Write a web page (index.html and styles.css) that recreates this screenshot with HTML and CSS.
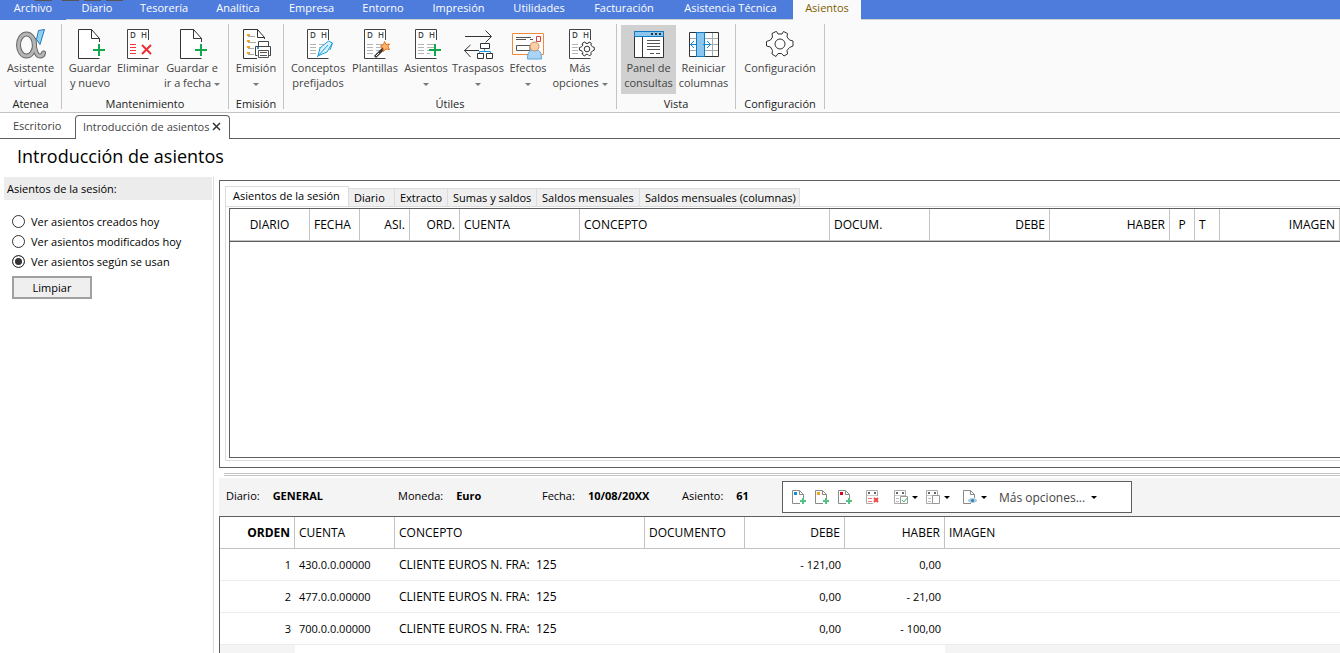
FILE: index.html
```html
<!DOCTYPE html>
<html lang="es">
<head>
<meta charset="utf-8">
<meta name="viewport" content="width=device-width, initial-scale=1">
<title>Introducción de asientos</title>
<link rel="stylesheet" href="styles.css">
</head>
<body>
<svg class="defs" aria-hidden="true" width="0" height="0">
  <symbol id="page" viewBox="0 0 32 32">
    <path d="M25.500 14V10.500L17.500 1.500H4.500V30.500H25.500M17.500 1.500V10.500H25.500" fill="#fff" stroke="#333"/>
    <path d="M19 22H31M25 16V28" stroke="#12a84c" stroke-width="2"/>
  </symbol>
  <symbol id="sheet" viewBox="0 0 32 32">
    <path d="M26.500 12V1.500H5.500V30.500H26.500" fill="#fff" stroke="#444"/>
    <text x="8" y="10" font-size="8" font-weight="600" fill="#444">D</text>
    <text x="19" y="10" font-size="8" font-weight="600" fill="#444">H</text>
  </symbol>
  <symbol id="rows" viewBox="0 0 32 32">
    <path d="M8 16.500H14M8 19.500H14M8 22.500H14M8 25.500H14M17 16.500H24M17 19.500H24M17 22.500H24M17 25.500H20" stroke="#b5b5b5"/>
  </symbol>
  <symbol id="gear" viewBox="0 0 32 32">
    <path d="M12 3.500H12.500L14 6H18L19.500 3.500L23.500 5.500L23 9L25.500 12L29 13V18L25.500 19.500L23 22.500L23.500 26L20 28L17.500 25.500H14L12 28.500L8 26L8.500 22.500L6.500 19L2.500 18V13.500L6.500 12L8.500 9L8 5.500Z" fill="#fff" stroke="#333" stroke-linejoin="round" vector-effect="non-scaling-stroke"/>
    <circle cx="16" cy="16" r="5" fill="#fff" stroke="#333" vector-effect="non-scaling-stroke"/>
  </symbol>
  <symbol id="mini-page" viewBox="0 0 16 16">
    <path d="M12.500 9V5.500L8.500 1.500H1.500V14.500H9M8.500 1.500V5.500H12.500" fill="#fff" stroke="#8a8a8a"/>
  </symbol>
  <symbol id="mini-plus" viewBox="0 0 16 16">
    <path d="M9 12H15M12 9V15" stroke="#55c184" stroke-width="2"/>
  </symbol>
  <symbol id="mini-sheet" viewBox="0 0 16 16">
    <path d="M12.500 7V1.500H1.500V14.500H8" fill="#fff" stroke="#aaa"/>
    <path d="M3 4H5M9 4H11" stroke="#666" stroke-width="2"/>
    <path d="M2 6.500H12" stroke="#ccc"/>
  </symbol>
</svg>

<nav class="menu" aria-label="Menú principal">
  <svg class="menu-marks" aria-hidden="true" width="123" height="1"><path d="M35 .5H52M62 .5H79M84 .5H101M106 .5H123" stroke="#555"/></svg>
  <a class="menu-file" href="#">Archivo</a><a href="#">Diario</a><a href="#">Tesorería</a><a href="#">Analítica</a><a href="#">Empresa</a><a href="#">Entorno</a><a href="#">Impresión</a><a href="#">Utilidades</a><a href="#">Facturación</a><a href="#">Asistencia Técnica</a><a class="current" href="#" aria-current="page">Asientos</a>
</nav>

<div class="ribbon">
  <section class="group g-atenea">
    <div class="tools">
      <button type="button"><svg viewBox="0 0 32 32"><g fill="none" stroke-linecap="round"><g stroke="#666" stroke-width="5"><ellipse cx="11.500" cy="17" rx="8" ry="11"/><path d="M19 12C19 20 21 28 25 28Q28 28 28.500 25"/></g><g stroke="#b5b5b5" stroke-width="3"><ellipse cx="11.500" cy="17" rx="8" ry="11"/><path d="M19 12C19 20 21 28 25 28Q28 28 28.500 25"/></g></g><path d="M23.500 2.500L29.500 1.500L25 16.500L21.500 11.500Z" fill="#8fd0f5" stroke="#2479b5"/></svg><span>Asistente<br>virtual</span></button>
    </div>
    <h2>Atenea</h2>
  </section>
  <section class="group g-mant">
    <div class="tools">
      <button type="button"><svg viewBox="0 0 32 32"><use href="#page"/></svg><span>Guardar<br>y nuevo</span></button>
      <button type="button"><svg viewBox="0 0 32 32"><use href="#sheet"/><path d="M8 16.500H14M8 19.500H14M8 22.500H14M8 25.500H14" stroke="#f03a3a"/><path d="M20 17L29 26M29 17L20 26" stroke="#ee2f2f" stroke-width="2"/></svg><span>Eliminar</span></button>
      <button type="button"><svg viewBox="0 0 32 32"><use href="#page"/></svg><span>Guardar e<br>ir a fecha <i class="arrow"></i></span></button>
    </div>
    <h2>Mantenimiento</h2>
  </section>
  <section class="group g-emision">
    <div class="tools">
      <button type="button"><svg viewBox="0 0 32 32"><path d="M24.500 11V9.500L17.500 1.500H3.500V30.500H17M17.500 1.500V9.500H24.500" fill="#fff" stroke="#333"/><path d="M7 7H10M7 13H10M7 19H10M7 25H10" stroke="#f2a024" stroke-width="2"/><path d="M8 8.500H15M8 14.500H16M8 20.500H14M8 26.500H14" stroke="#aaa"/><path d="M18.500 18V13.500H28.500V18M17.500 27.500H15.500V18.500H30.500V27.500H28.500" fill="#fff" stroke="#444"/><path d="M18.500 22.500H28.500V29.500H18.500ZM20 24.500H27M20 27.500H27" fill="#fff" stroke="#555"/><path d="M17 20H19" stroke="#2a9be0" stroke-width="2"/></svg><span>Emisión<br><i class="arrow"></i></span></button>
    </div>
    <h2>Emisión</h2>
  </section>
  <section class="group g-utiles">
    <div class="tools">
      <button type="button"><svg viewBox="0 0 32 32"><use href="#sheet"/><use href="#rows"/><path d="M16 28L18 20L26.500 13L30.500 15L25 24L18 27ZM15 29L26 17M30.500 15L28 22" fill="#d8f1fc" stroke="#1ba0dc"/></svg><span>Conceptos<br>prefijados</span></button>
      <button type="button"><svg viewBox="0 0 32 32"><use href="#sheet"/><use href="#rows"/><path d="M16 29L25 20" stroke="#333" stroke-width="3"/><path d="M17 28L20 25" stroke="#fff"/><path d="M25.500 13.500L27 16.500L30.500 16L29 18.500L30.500 21.500L27 21L24.500 23.500L24 20L21.500 18L24.500 16.500Z" fill="#fbb36b" stroke="#e8741c"/></svg><span>Plantillas</span></button>
      <button type="button"><svg viewBox="0 0 32 32"><use href="#sheet"/><use href="#rows"/><path d="M19 22H31M25 16V28" stroke="#12a84c" stroke-width="2"/></svg><span>Asientos<br><i class="arrow"></i></span></button>
      <button type="button"><svg viewBox="0 0 32 32"><path d="M3 8.500H29M23.500 2.500L29.500 8.500L23.500 14.500M17 22.500H2.500M8.500 17L2.500 22.500L8.500 29" fill="none" stroke="#333"/><path d="M17.500 25V23.500H28.500V25M22.500 20V24" fill="none" stroke="#1b98dd"/><path d="M18.500 15.500H27.500V20.500H18.500ZM15.500 25.500H21.500V30.500H15.500ZM24.500 25.500H30.500V30.500H24.500Z" fill="#fff" stroke="#333"/></svg><span>Traspasos<br><i class="arrow"></i></span></button>
      <button type="button"><svg class="wide" viewBox="0 0 34 32"><path d="M1.500 5.500H32.500V26.500H1.500Z" fill="#fff" stroke="#ee8a3c"/><path d="M5 9.500H20M5 11.500H15M19 11.500H22" stroke="#555"/><path d="M5.500 17.500H19V22.500H5.500Z" fill="#fff" stroke="#555"/><path d="M25.500 8.500H29.500V13.500H25.500Z" fill="#fff" stroke="#e43b3b"/><path d="M16.500 31C16.500 22 20 22 23.500 22S30.500 22 30.500 31Z" fill="#a9d4f5" stroke="#5da7dd"/><circle cx="23.500" cy="18.500" r="4.500" fill="#fbcfa6" stroke="#c98e5e"/></svg><span>Efectos<br><i class="arrow"></i></span></button>
      <button type="button"><svg viewBox="0 0 32 32"><use href="#sheet"/><use href="#rows"/><use href="#gear" x="14" y="12" width="18" height="18"/></svg><span>Más<br>opciones <i class="arrow"></i></span></button>
    </div>
    <h2>Útiles</h2>
  </section>
  <section class="group g-vista">
    <div class="tools">
      <button type="button" class="pressed" aria-pressed="true"><svg viewBox="0 0 32 32"><path d="M1.500 3.500H30.500V29.500H1.500Z" fill="#fff" stroke="#333"/><path d="M1.500 3.500H30.500V8.500H1.500Z" fill="#8ac6ee" stroke="#1279c4"/><path d="M18 6H20M22 6H24M26 6H28" stroke="#333" stroke-width="2"/><path d="M9.500 9V29" stroke="#333"/><path d="M14 12.500H27M14 15.500H27M14 18.500H27M14 21.500H27M17 25.500H21M23 25.500H27" stroke="#555"/></svg><span>Panel de<br>consultas</span></button>
      <button type="button"><svg viewBox="0 0 32 32"><path d="M1.500 4.500H30.500V28.500H1.500Z" fill="#fff" stroke="#333"/><path d="M2 10.500H30M2 16.500H30M2 22.500H30M24.500 5V28" stroke="#aaa"/><path d="M8.500 4.500H16.500V28.500H8.500Z" fill="#8ac6ee" stroke="#1279c4"/><path d="M8 16.500H2.500M6 13L2.500 16.500L6 20M15 16.500H22.500M19 13L22.500 16.500L19 20" fill="none" stroke="#158bd6"/></svg><span>Reiniciar<br>columnas</span></button>
    </div>
    <h2>Vista</h2>
  </section>
  <section class="group g-config">
    <div class="tools">
      <button type="button"><svg viewBox="0 0 32 32"><use href="#gear"/></svg><span>Configuración</span></button>
    </div>
    <h2>Configuración</h2>
  </section>
</div>

<nav class="doc-tabs" aria-label="Documentos abiertos">
  <a class="doc-tab" href="#">Escritorio</a>
  <div class="doc-tab active"><a href="#">Introducción de asientos</a><button type="button" aria-label="Cerrar"><svg viewBox="0 0 9 9"><path d="M1 1L8 8M8 1L1 8" stroke="#333" stroke-width="1.500"/></svg></button></div>
</nav>

<main>
  <h1>Introducción de asientos</h1>
  <div class="workspace">
    <aside>
      <form>
        <h2 id="session-title">Asientos de la sesión:</h2>
        <div class="options" role="radiogroup" aria-labelledby="session-title">
          <label><input type="radio" name="view">Ver asientos creados hoy</label>
          <label><input type="radio" name="view">Ver asientos modificados hoy</label>
          <label><input type="radio" name="view" checked>Ver asientos según se usan</label>
        </div>
        <button type="button" class="clear">Limpiar</button>
      </form>
    </aside>
    <div class="content">
      <section class="query">
        <div class="tabs" role="tablist">
          <button type="button" role="tab" aria-selected="true">Asientos de la sesión</button>
          <button type="button" role="tab">Diario</button>
          <button type="button" role="tab">Extracto</button>
          <button type="button" role="tab">Sumas y saldos</button>
          <button type="button" role="tab">Saldos mensuales</button>
          <button type="button" role="tab">Saldos mensuales (columnas)</button>
        </div>
        <div class="tab-page">
          <div class="list">
            <table class="session">
              <colgroup><col class="w80"><col class="w50"><col class="w50"><col class="w50"><col class="w120"><col class="w250"><col class="w100"><col class="w120"><col class="w120"><col class="w25"><col class="w25"><col></colgroup>
              <thead><tr><th class="center">DIARIO</th><th>FECHA</th><th class="num">ASI.</th><th class="num">ORD.</th><th>CUENTA</th><th>CONCEPTO</th><th>DOCUM.</th><th class="num">DEBE</th><th class="num">HABER</th><th class="center">P</th><th>T</th><th class="num">IMAGEN</th></tr></thead>
            </table>
          </div>
        </div>
      </section>
      <div class="splitter"></div>
      <section class="entry-bar">
        <dl>
          <div><dt>Diario:</dt><dd>GENERAL</dd></div>
          <div><dt>Moneda:</dt><dd>Euro</dd></div>
          <div><dt>Fecha:</dt><dd>10/08/20XX</dd></div>
          <div><dt>Asiento:</dt><dd>61</dd></div>
        </dl>
        <div class="toolbar" role="toolbar" aria-label="Apuntes">
          <div class="set adds">
            <button type="button" aria-label="Nuevo"><svg viewBox="0 0 16 16"><use href="#mini-page"/><path d="M3 3H6V6H3Z" fill="#0a94e0"/><use href="#mini-plus"/></svg></button>
            <button type="button" aria-label="Insertar"><svg viewBox="0 0 16 16"><use href="#mini-page"/><path d="M3 3H6V6H3Z" fill="#f5a31c"/><use href="#mini-plus"/></svg></button>
            <button type="button" aria-label="Duplicar"><svg viewBox="0 0 16 16"><use href="#mini-page"/><path d="M3 3H6V6H3Z" fill="#e0001a"/><use href="#mini-plus"/></svg></button>
          </div>
          <button type="button" aria-label="Eliminar"><svg viewBox="0 0 16 16"><use href="#mini-sheet"/><path d="M3 9.500H7M3 12.500H7" stroke="#f07a7a"/><path d="M9 9L13 13M13 9L9 13" stroke="#f04545" stroke-width="2"/></svg></button>
          <div class="set">
            <button type="button" aria-label="Punteo"><svg viewBox="0 0 16 16"><use href="#mini-sheet"/><path d="M3 9.500H6M3 12.500H6" stroke="#bbb"/><path d="M7.500 7.500H14.500V14.500H7.500Z" fill="#fff" stroke="#999"/><path d="M9 11L11 13L14 9" fill="none" stroke="#3cb873"/></svg><i class="arrow"></i></button>
            <button type="button" aria-label="Copiar"><svg viewBox="0 0 16 16"><use href="#mini-sheet"/><path d="M3 9.500H6M3 12.500H6" stroke="#bbb"/><path d="M7.500 6.500H14.500V14.500H7.500Z" fill="#fff" stroke="#999"/></svg><i class="arrow"></i></button>
          </div>
          <button type="button" aria-label="Ver documento"><svg viewBox="0 0 16 16"><use href="#mini-page"/><path d="M6 11.500Q10.500 7.500 15 11.500Q10.500 15.500 6 11.500Z" fill="#a5cbe6" stroke="#a5c5da"/><circle cx="10.500" cy="11.500" r="1.500" fill="#347eb3"/></svg><i class="arrow"></i></button>
          <button type="button" class="more">Más opciones... <i class="arrow"></i></button>
        </div>
      </section>
      <div class="entries">
        <table>
          <colgroup><col class="w75"><col class="w100"><col class="w250"><col class="w100"><col class="w100"><col class="w100"><col></colgroup>
          <thead><tr><th class="num order">ORDEN</th><th>CUENTA</th><th>CONCEPTO</th><th>DOCUMENTO</th><th class="num">DEBE</th><th class="num">HABER</th><th>IMAGEN</th></tr></thead>
          <tbody>
            <tr><td class="num">1</td><td class="account">430.0.0.00000</td><td>CLIENTE EUROS N. FRA:  125</td><td></td><td class="num">- 121,00</td><td class="num">0,00</td><td></td></tr>
            <tr><td class="num">2</td><td class="account">477.0.0.00000</td><td>CLIENTE EUROS N. FRA:  125</td><td></td><td class="num">0,00</td><td class="num">- 21,00</td><td></td></tr>
            <tr><td class="num">3</td><td class="account">700.0.0.00000</td><td>CLIENTE EUROS N. FRA:  125</td><td></td><td class="num">0,00</td><td class="num">- 100,00</td><td></td></tr>
            <tr class="blank"><td></td><td></td><td></td><td></td><td></td><td></td><td></td></tr>
          </tbody>
        </table>
      </div>
    </div>
  </div>
</main>
</body>
</html>
```
FILE: styles.css
```css
:root {
  --dark: #5f5f5f;
  --line: #c3c3c3;
  --soft: #dcdcdc;
}
* { box-sizing: border-box; }
body {
  margin: 0;
  min-height: 100vh;
  display: flex;
  flex-direction: column;
  overflow: hidden;
  background: #fff;
  color: #000;
  font: 11px/15px "Open Sans", "Noto Sans", sans-serif;
}
h1, h2, dl, dd { margin: 0; font-weight: 400; }
h2 { font-size: 11px; }
a { color: inherit; text-decoration: none; }
button {
  margin: 0;
  padding: 0;
  border: 0;
  background: none;
  color: inherit;
  font: inherit;
}
svg { display: block; fill: none; }
svg.defs { display: none; }
.arrow {
  display: inline-block;
  border: 3px solid transparent;
  border-top-color: currentColor;
  border-bottom: 0;
  vertical-align: middle;
}

/* Menu bar */
.menu {
  position: relative;
  display: grid;
  grid-template-columns: 66px 62px 72px 76px 71px 72px 79px 82px 88px 125px 68px;
  height: 19px;
  background: #4e7cdc;
  color: #fff;
  text-align: center;
}
.menu a { height: 19px; line-height: 16px; white-space: nowrap; }
.menu .menu-file { height: 20px; background: #4e7cdc; z-index: 1; }
.menu .current { height: 20px; background: #fafafa; color: #7d5e00; z-index: 1; }
.menu-marks { position: absolute; top: 0; left: 0; z-index: 2; }

/* Ribbon */
.ribbon {
  display: flex;
  height: 94px;
  padding-top: 4px;
  border-top: 1px solid #d0d0d0;
  border-bottom: 1px solid var(--line);
  background: #fafafa;
}
.group {
  display: flex;
  flex-direction: column;
  height: 85px;
  border-right: 1px solid var(--line);
}
.group h2 { flex: none; margin-top: 2px; text-align: center; color: #222; }
.tools { flex: none; display: grid; height: 70px; padding-top: 1px; }
.tools button {
  display: flex;
  flex-direction: column;
  align-items: center;
  padding-top: 3px;
  color: #444;
  white-space: nowrap;
}
.tools svg { flex: none; width: 32px; height: 32px; }
.tools svg.wide { width: 34px; }
.tools span { min-height: 30px; }
.tools .arrow { color: #777; }
.tools .pressed { background: #d0d0d0; }
.g-atenea .tools { grid-template-columns: 61px; }
.g-mant .tools { grid-template-columns: 52px 44px 64px; padding-left: 2px; padding-right: 4px; }
.g-emision .tools { grid-template-columns: 54px; }
.g-utiles .tools { grid-template-columns: 60px 54px 48px 56px 44px 60px; padding-left: 4px; padding-right: 6px; }
.g-vista .tools { grid-template-columns: 55px 55px; padding-left: 4px; padding-right: 4px; }
.g-config .tools { grid-template-columns: 88px; }

/* Open documents */
.doc-tabs {
  display: flex;
  align-items: flex-end;
  height: 26px;
  border-bottom: 1px solid var(--dark);
  color: #444;
}
.doc-tab { width: 75px; height: 24px; padding-left: 13px; line-height: 24px; }
.doc-tab.active {
  display: flex;
  align-items: center;
  justify-content: space-between;
  width: 155px;
  margin-bottom: -1px;
  padding: 0 8px 2px 7px;
  border: 1px solid var(--dark);
  border-bottom: 0;
  border-radius: 4px 4px 0 0;
  background: #fff;
  white-space: nowrap;
}
.doc-tab svg { width: 9px; height: 9px; }

/* Workspace */
main { flex: 1; display: flex; flex-direction: column; }
h1 { padding: 3px 17px 7px; font-size: 18px; line-height: 28px; }
.workspace { flex: 1; display: flex; }
aside { flex: none; width: 214px; padding: 0 1px 0 4px; border-right: 1px solid var(--soft); }
aside h2 { padding: 4px 3px; background: #ececec; }
.options { display: grid; gap: 4px; padding: 13px 8px 7px; }
.options label { display: flex; align-items: center; gap: 6px; height: 16px; white-space: nowrap; }
.options input {
  appearance: none;
  width: 13px;
  height: 13px;
  margin: 0;
  border: 1px solid #333;
  border-radius: 50%;
  background: #fff;
}
.options input:checked { background: #333; box-shadow: inset 0 0 0 2px #fff; }
.clear {
  width: 80px;
  height: 23px;
  margin-left: 8px;
  border: 2px solid #a0a0a0;
  background: #efefef;
}
.content { flex: 1; display: flex; flex-direction: column; min-width: 0; padding: 3px 0 0 5px; }

/* Query panel */
.query {
  display: flex;
  flex-direction: column;
  height: 288px;
  padding: 5px 0 6px 5px;
  border: 1px solid var(--dark);
  border-right: 0;
}
.tabs { display: grid; grid-template-columns: 124px 46px 53px 89px 103px 160px; align-items: end; height: 20px; }
.tabs button {
  height: 18px;
  padding-left: 5px;
  border: solid var(--soft);
  border-width: 1px 1px 0 0;
  background: #efefef;
  text-align: left;
  white-space: nowrap;
}
.tabs [aria-selected="true"] { height: 20px; padding: 0 0 2px 7px; border-left-width: 1px; background: #fff; }
.tab-page {
  flex: 1;
  display: flex;
  padding: 1px 0 2px 3px;
  border: 1px solid var(--soft);
  border-right: 0;
}
.list { flex: 1; border: 1px solid var(--dark); border-right: 0; }
table { width: 100%; border-collapse: separate; border-spacing: 0; table-layout: fixed; font-size: 12px; }
th, td { height: 32px; padding: 0 4px; text-align: left; font-weight: 400; white-space: pre; }
th { border-right: 1px solid var(--line); border-bottom: 1px solid var(--line); }
.num { text-align: right; }
.center { text-align: center; }
.session { border-bottom: 1px solid var(--dark); }
.w25 { width: 25px; }
.w50 { width: 50px; }
.w75 { width: 75px; }
.w80 { width: 80px; }
.w100 { width: 100px; }
.w120 { width: 120px; }
.w250 { width: 250px; }

/* Entry bar */
.splitter { height: 3px; margin: 5px 0 2px 5px; border: solid var(--line); border-width: 1px 0; }
.entry-bar { display: flex; align-items: center; height: 38px; background: #f4f4f4; }
.entry-bar dl { display: grid; grid-template-columns: 172px 144px 140px 100px; padding: 0 0 3px 7px; }
.entry-bar dl div { display: flex; gap: 13px; white-space: nowrap; }
.entry-bar dd { font-weight: 700; }
.toolbar {
  display: flex;
  align-items: center;
  gap: 12px;
  width: 350px;
  height: 32px;
  padding-left: 8px;
  border: 1px solid var(--dark);
  background: #fff;
}
.toolbar button { display: flex; align-items: center; gap: 3px; }
.toolbar svg { width: 16px; height: 16px; }
.toolbar .arrow { color: #000; }
.toolbar .set { display: flex; gap: 7px; }
.toolbar .more { gap: 6px; color: #444; font-size: 12px; white-space: nowrap; }

/* Entries */
.entries { flex: 1; border: solid var(--dark); border-width: 1px 0 0 1px; }
.entries th:last-child { border-right: 0; }
.entries .order { font-weight: 700; }
.entries td { border-bottom: 1px solid #ececec; }
.entries td.num, .entries td.account { font-size: 11px; }
.entries .blank td { height: 8px; border: 0; }
.entries .blank td:first-child, .entries .blank td:last-child { background: #f4f4f4; }
```
